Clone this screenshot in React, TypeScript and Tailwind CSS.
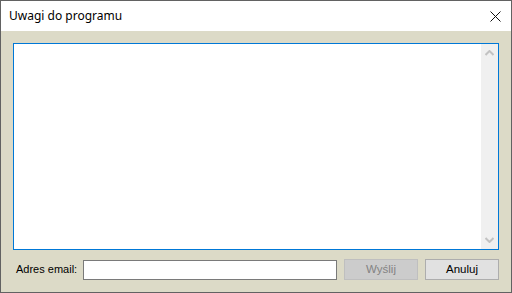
const ArrowUp = () => (
  <svg width="9" height="6" viewBox="0 0 9 6">
    <path d="M0.5 5 L4.5 1 L8.5 5" fill="none" stroke="#c2c2c2" strokeWidth="2" />
  </svg>
);

const ArrowDown = () => (
  <svg width="9" height="6" viewBox="0 0 9 6">
    <path d="M0.5 1 L4.5 5 L8.5 1" fill="none" stroke="#c2c2c2" strokeWidth="2" />
  </svg>
);

const App = () => {
  return (
    <div className="w-[512px] h-[293px] flex flex-col border border-[#626262] bg-[#dcdac7] overflow-hidden">
      {/* title bar */}
      <div className="h-[30px] bg-white flex items-center justify-between pl-[8px] pr-[10px] shrink-0">
        <span className="text-[12px] text-black" style={{ fontFamily: '"Noto Sans", sans-serif' }}>
          Uwagi do programu
        </span>
        <svg width="11" height="11" viewBox="0 0 11 11">
          <path d="M0.5 0.5 L10.5 10.5 M10.5 0.5 L0.5 10.5" stroke="#111" strokeWidth="1" />
        </svg>
      </div>

      {/* body */}
      <div className="flex flex-col pt-[12px] pl-[12px] pr-[12px]">
        <div className="h-[207px] border border-[#0078d7] bg-white flex justify-end">
          <div className="w-[17px] bg-[#f0f0f0] flex flex-col items-center justify-between py-[6px]">
            <ArrowUp />
            <ArrowDown />
          </div>
        </div>

        <div
          className="flex items-center mt-[9px] h-[21px] text-[11.5px]"
          style={{ fontFamily: '"Liberation Sans", Arial, sans-serif' }}
        >
          <span className="w-[70px] pl-[3px] text-[11px] text-black">Adres email:</span>
          <div className="w-[254px] h-[20px] border border-[#7a7a7a] bg-white" />
          <button className="ml-[7px] w-[74px] h-[21px] border border-[#bfbfbf] bg-[#cccccc] text-[#838383]">
            Wyślij
          </button>
          <button className="ml-[7px] w-[74px] h-[21px] border border-[#adadad] bg-[#e1e1e1] text-black">
            Anuluj
          </button>
        </div>
      </div>
    </div>
  );
};

export default App;
